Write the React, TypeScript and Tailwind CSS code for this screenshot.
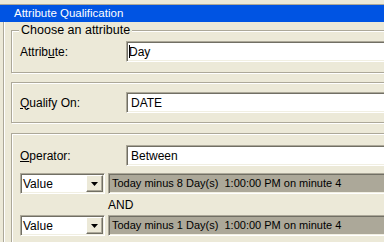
import React from "react";

const font = { fontFamily: '"Liberation Sans", Arial, sans-serif' };

function Group({ legend, children, className = "" }: { legend?: string; children: React.ReactNode; className?: string }) {
  return (
    <div
      className={`relative w-[420px] border border-[#ACA899] shadow-[inset_1px_1px_0_#fff,1px_1px_0_#fff] ${className}`}
    >
      {legend && (
        <span className="absolute -top-[8px] left-[7px] bg-[#ECE9D8] px-[2px] text-[12.5px] leading-[14px] text-black">
          {legend}
        </span>
      )}
      {children}
    </div>
  );
}

function Sunken({ children, className = "" }: { children?: React.ReactNode; className?: string }) {
  return (
    <div
      className={`h-[21px] border border-t-[#ACA899] border-l-[#ACA899] border-b-white border-r-white shadow-[inset_1px_1px_0_#716F64,inset_-1px_-1px_0_#F1EFE2] ${className}`}
    >
      {children}
    </div>
  );
}

function Field({ label, mnemonic, value, caret }: { label: string; mnemonic: number; value: string; caret?: boolean }) {
  return (
    <div className="flex items-center">
      <span className="w-[114px] pl-[8px] text-[12px] text-black">
        {label.slice(0, mnemonic)}
        <span className="underline">{label[mnemonic]}</span>
        {label.slice(mnemonic + 1)}
      </span>
      <Sunken className="flex-1 bg-white">
        <div className={`flex h-full items-center text-[12px] text-black ${caret ? "pl-[2px]" : "pl-[4px]"}`}>
          {caret && <span className="mr-[-1px] h-[13px] w-[1px] bg-black" />}
          {value}
        </div>
      </Sunken>
    </div>
  );
}

function ValueRow({ days }: { days: number }) {
  return (
    <div className="flex items-center">
      <Sunken className="ml-[8px] flex w-[85px] items-center bg-white">
        <span className="flex-1 pl-[2px] text-[12px] text-black">Value</span>
        <span className="mr-[1px] flex h-[17px] w-[17px] items-center justify-center border border-t-white border-l-white border-b-[#716F64] border-r-[#716F64] bg-[#ECE9D8] shadow-[inset_-1px_-1px_0_#ACA899]">
          <svg width="7" height="4" viewBox="0 0 7 4">
            <path d="M0 0h7L3.5 4z" fill="#000" />
          </svg>
        </span>
      </Sunken>
      <Sunken className="ml-[3px] flex flex-1 items-center bg-[#ACA899]">
        <span className="whitespace-pre pl-[3px] text-[11px] text-black">
          {`Today minus ${days} Day(s)  1:00:00 PM on minute 4`}
        </span>
      </Sunken>
    </div>
  );
}

export default function App() {
  return (
    <div className="h-[242px] w-[384px] overflow-hidden bg-[#ECE9D8]" style={font}>
      <div className="h-[5px] border-b border-[#ACA899]" />
      <div className="h-[17px] bg-[#0054E3] pl-[14px] text-[11.5px] leading-[17px] text-white">
        Attribute Qualification
      </div>
      <div className="ml-[3px] h-[220px] border-l border-[#ACA899] pl-[7px] pt-[8px] shadow-[inset_1px_0_0_#fff]">
        <Group legend="Choose an attribute" className="pb-[10px] pt-[10px]">
          <Field label="Attribute:" mnemonic={6} value="Day" caret />
        </Group>
        <Group className="mt-[9px] pb-[9px] pt-[9px]">
          <Field label="Qualify On:" mnemonic={0} value="DATE" />
        </Group>
        <Group className="mt-[10px] h-[120px] pt-[11px]">
          <Field label="Operator:" mnemonic={0} value="Between" />
          <div className="mt-[7px]">
            <ValueRow days={8} />
          </div>
          <div className="flex h-[21px] items-center pl-[96px] text-[12px] text-black">AND</div>
          <ValueRow days={1} />
        </Group>
      </div>
    </div>
  );
}
